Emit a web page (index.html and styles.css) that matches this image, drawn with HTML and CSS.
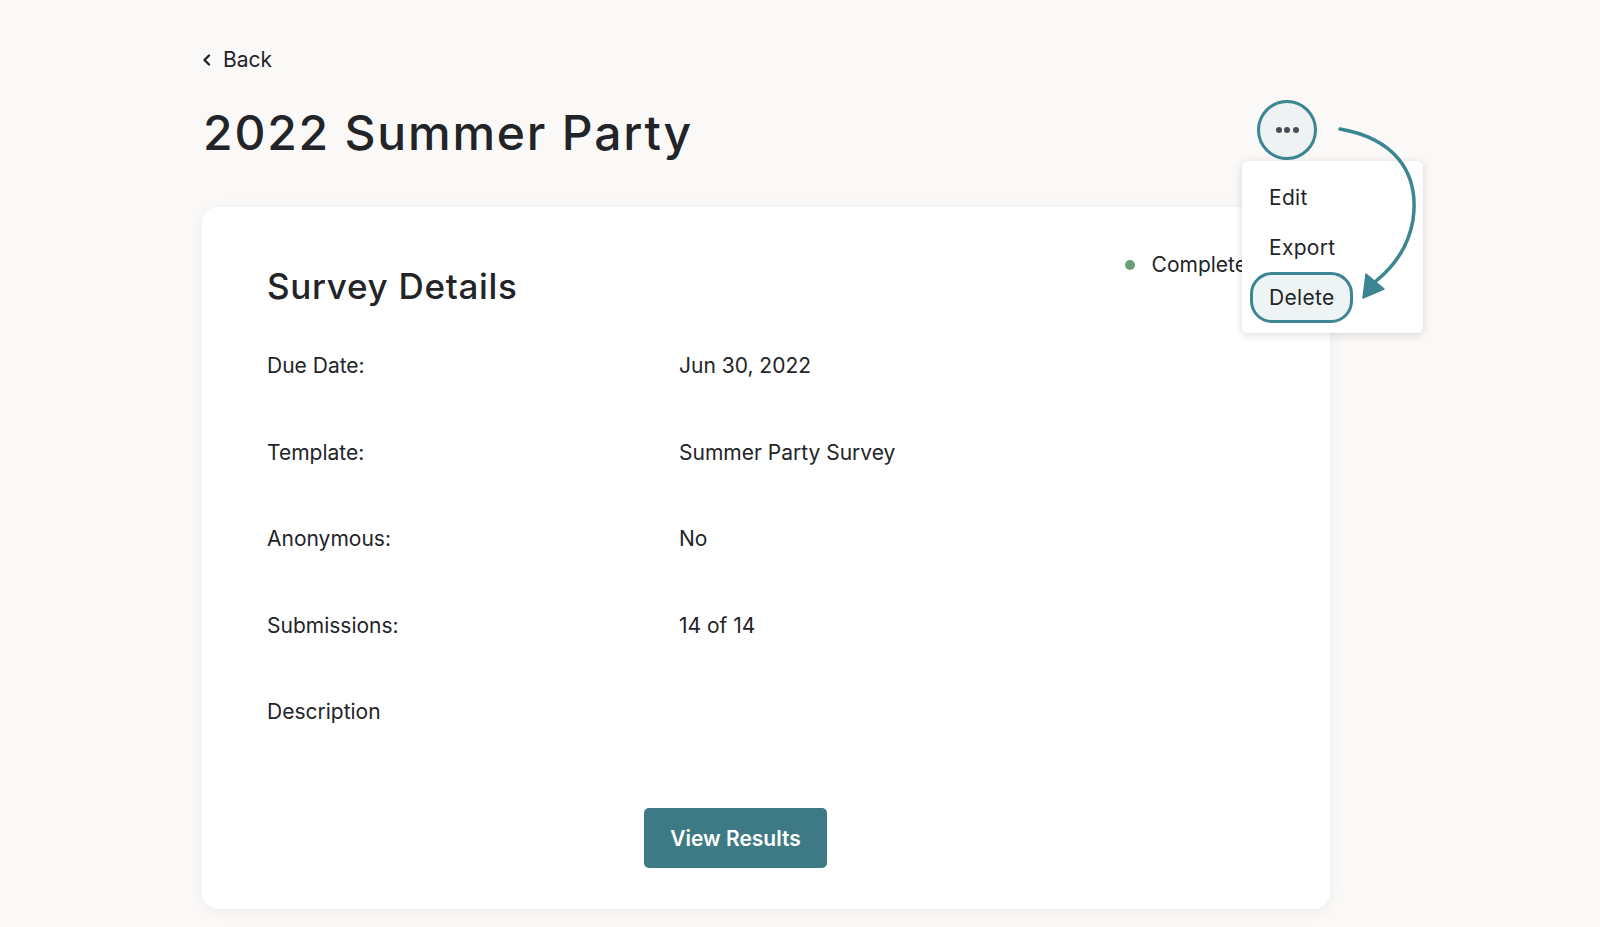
FILE: index.html
```html
<!DOCTYPE html>
<html lang="en">
<head>
<meta charset="utf-8">
<title>2022 Summer Party</title>
<link rel="stylesheet" href="styles.css">
</head>
<body>
<main class="page">
  <a class="back" href="#">
    <svg class="back-icon" width="10" height="12" viewBox="0 0 10 12"><path d="M7 1.5 L2.5 6 L7 10.5" fill="none" stroke="#222428" stroke-width="2.4" stroke-linecap="round" stroke-linejoin="round"/></svg>
    <span>Back</span>
  </a>
  <div class="title-row">
    <h1 class="title">2022 Summer Party</h1>
    <div class="more-wrap">
      <button class="more-btn" aria-label="More">
        <span class="dot"></span><span class="dot"></span><span class="dot"></span>
      </button>
      <div class="menu">
        <div class="menu-item">Edit</div>
        <div class="menu-item">Export</div>
        <div class="menu-item menu-item--hl">Delete</div>
      </div>
    </div>
  </div>
  <section class="card">
    <div class="card-head">
      <h2 class="card-title">Survey Details</h2>
      <div class="status"><span class="status-dot"></span>Complete</div>
    </div>
    <dl class="details">
      <dt>Due Date:</dt><dd>Jun 30, 2022</dd>
      <dt>Template:</dt><dd>Summer Party Survey</dd>
      <dt>Anonymous:</dt><dd>No</dd>
      <dt>Submissions:</dt><dd>14 of 14</dd>
      <dt>Description</dt><dd></dd>
    </dl>
    <div class="card-foot">
      <button class="primary">View Results</button>
    </div>
  </section>
</main>
<svg class="annot" width="1600" height="927" viewBox="0 0 1600 927">
  <path d="M1340 129 C1392 138 1420 170 1413 220 C1408 250 1392 268 1376 281" fill="none" stroke="#3b8692" stroke-width="3.5" stroke-linecap="round"/>
  <polygon points="1363,298 1366,274 1384,289" fill="#3b8692" stroke="#3b8692" stroke-width="1.5" stroke-linejoin="round"/>
</svg>
</body>
</html>
```

FILE: styles.css
```css
* { box-sizing: border-box; }
html, body { margin: 0; padding: 0; }
body {
  background: #faf9f7;
  font-family: Inter, "Noto Sans", sans-serif;
  color: #222428;
  width: 1600px;
  height: 927px;
  overflow: hidden;
  position: relative;
}
.page {
  width: 1128px;
  margin-left: 202px;
  padding-top: 48px;
}
.back {
  display: inline-flex;
  align-items: center;
  gap: 11px;
  color: #222428;
  text-decoration: none;
  font-size: 21px;
  line-height: 24px;
}
.back-icon { display: block; }
.title-row {
  margin-top: 28px;
  display: flex;
  justify-content: space-between;
  align-items: flex-start;
  padding-right: 13px;
  height: 60px;
}
.title {
  margin: 3px 0 0 1px;
  font-size: 48px;
  line-height: 60px;
  font-weight: 500;
  letter-spacing: 1.8px;
}
.more-wrap { position: relative; }
.more-btn {
  width: 60px;
  height: 60px;
  border-radius: 50%;
  border: 3.5px solid #3b8692;
  background: #eef2f3;
  display: flex;
  align-items: center;
  justify-content: center;
  gap: 2.5px;
  padding: 0;
}
.dot {
  width: 6px;
  height: 6px;
  border-radius: 50%;
  background: #474c57;
}
.menu {
  position: absolute;
  top: 61px;
  left: -15px;
  width: 181px;
  height: 172px;
  background: #fff;
  border-radius: 6px;
  box-shadow: 0 2px 10px rgba(0,0,0,0.14);
  padding: 11px 5px 10px 8px;
  display: flex;
  flex-direction: column;
  align-items: flex-start;
  z-index: 2;
}
.menu-item {
  height: 50px;
  display: flex;
  align-items: center;
  padding: 0 16px;
  border: 3.5px solid transparent;
  border-radius: 22px;
  font-size: 21px;
  letter-spacing: 0.3px;
}
.menu-item--hl {
  height: 51px;
  border-color: #3b8692;
  background: #eef3f4;
}
.card {
  margin-top: 47px;
  background: #fff;
  border-radius: 16px;
  box-shadow: 0 2px 14px rgba(0,0,0,0.05);
  padding: 46px 65px 41px;
}
.card-head {
  display: flex;
  justify-content: space-between;
  align-items: flex-start;
}
.card-title {
  margin: 13px 0 0;
  font-size: 35px;
  line-height: 40px;
  font-weight: 500;
  letter-spacing: 0.7px;
}
.status {
  display: flex;
  align-items: center;
  gap: 17px;
  font-size: 21px;
  line-height: 24px;
  margin-right: 18px;
}
.status-dot {
  width: 10px;
  height: 10px;
  border-radius: 50%;
  background: #6a9e74;
}
.details {
  margin: 48px 0 0;
  display: grid;
  grid-template-columns: 412px 1fr;
  row-gap: 62.5px;
  font-size: 21px;
  line-height: 24px;
}
.details dt, .details dd { margin: 0; }
.card-foot {
  margin-top: 84px;
  display: flex;
  justify-content: center;
  padding-right: 61px;
}
.primary {
  width: 183px;
  height: 60px;
  border: none;
  border-radius: 5px;
  background: #3d7a85;
  color: #fff;
  font-family: Inter, "Noto Sans", sans-serif;
  font-size: 21px;
  font-weight: 600;
}
.annot {
  position: absolute;
  left: 0;
  top: 0;
  pointer-events: none;
  z-index: 3;
}
```
